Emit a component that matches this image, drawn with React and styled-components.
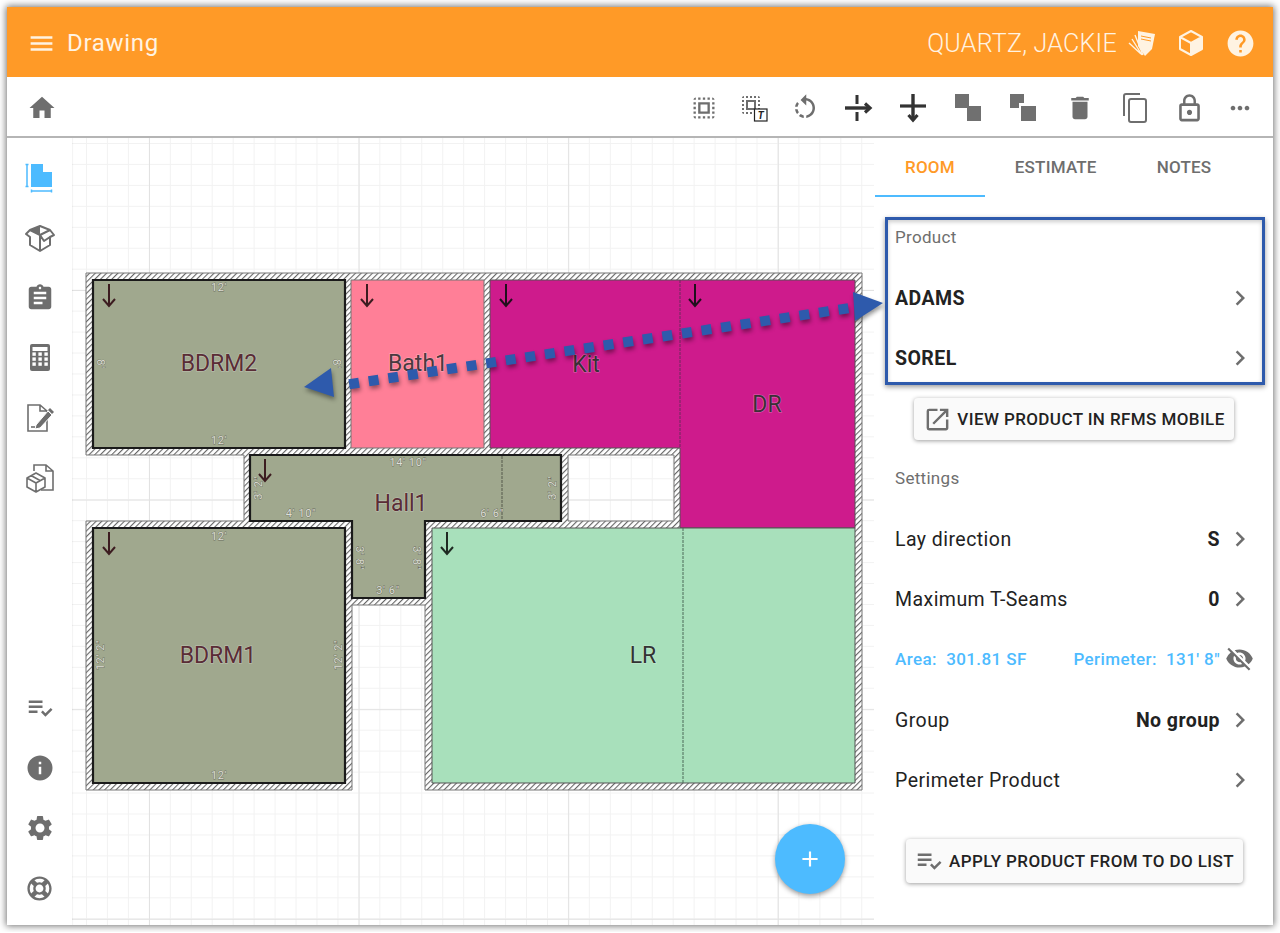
import React from "react";
import styled, { createGlobalStyle } from "styled-components";
import {
  MdMenu,
  MdHome,
  MdChevronRight,
  MdOpenInNew,
  MdInfo,
  MdSettings,
  MdDelete,
  MdHelp,
  MdPlaylistAddCheck,
  MdVisibilityOff,
  MdAssignment,
  MdRotateLeft,
  MdLockOutline,
  MdMoreHoriz,
  MdSelectAll,
  MdAdd,
} from "react-icons/md";
import { FaRegLifeRing } from "react-icons/fa";

const ORANGE = "#ff9a27";
const BLUE = "#4dbbff";
const GREY = "#6e6e6e";
const NOTE = "#2e5aac";

const GlobalStyle = createGlobalStyle`
  html, body { margin: 0; padding: 0; background: #fff; }
  body { font-family: Roboto, "Liberation Sans", sans-serif; }
  * { box-sizing: border-box; }
`;

/* floor plan data, page coordinates (the svg viewBox starts at the canvas corner) */
const ROOMS = [
  { id: "bdrm2", points: "93,280 345,280 345,448 93,448", fill: "#a0a88e", stroke: "#1a1a1a", w: 2.2 },
  { id: "bath1", points: "351,280 484,280 484,448 351,448", fill: "#ff7f97", stroke: "#777", w: 1 },
  { id: "kit", points: "490,280 855,280 855,528 680,528 680,448 490,448", fill: "#ce1b8c", stroke: "#555", w: 1 },
  { id: "hall1", points: "250,455 561,455 561,521 425,521 425,598 352,598 352,521 250,521", fill: "#a0a88e", stroke: "#1a1a1a", w: 2.2 },
  { id: "bdrm1", points: "93,528 345,528 345,783 93,783", fill: "#a0a88e", stroke: "#1a1a1a", w: 2.2 },
  { id: "lr", points: "432,528 855,528 855,783 432,783", fill: "#a8e0bb", stroke: "#555", w: 1 },
];

const SEAMS = [
  [680, 280, 680, 448, "#6d2a5c"],
  [683, 528, 683, 783, "#4c6b58"],
  [502, 456, 502, 520, "#55584a"],
];

const LABELS = [
  { text: "BDRM2", x: 219, y: 371, color: "#5a2c36" },
  { text: "Bath1", x: 418, y: 371, color: "#4a3a40" },
  { text: "Kit", x: 586, y: 372, color: "#3a3036" },
  { text: "DR", x: 767, y: 412, color: "#3a3036" },
  { text: "Hall1", x: 401, y: 511, color: "#5a2c36" },
  { text: "BDRM1", x: 218, y: 663, color: "#5a2c36" },
  { text: "LR", x: 643, y: 663, color: "#333" },
];

const DIMS = [
  { text: "12'", x: 219, y: 291 },
  { text: "12'", x: 219, y: 444 },
  { text: "8'", x: 100, y: 364, r: 90 },
  { text: "8'", x: 336, y: 364, r: 90 },
  { text: "14' 10\"", x: 408, y: 466 },
  { text: "3' 2\"", x: 258, y: 488, r: 270 },
  { text: "3' 2\"", x: 552, y: 488, r: 270 },
  { text: "4' 10\"", x: 301, y: 517 },
  { text: "6' 6\"", x: 492, y: 517 },
  { text: "3' 8\"", x: 359, y: 558, r: 90 },
  { text: "3' 8\"", x: 416, y: 558, r: 90 },
  { text: "3' 6\"", x: 388, y: 594 },
  { text: "12'", x: 219, y: 540 },
  { text: "12'", x: 219, y: 779 },
  { text: "12' 2\"", x: 100, y: 655, r: 270 },
  { text: "12' 2\"", x: 338, y: 655, r: 270 },
];

const LAY_ARROWS = [
  [109, 284, "#3c1c20"],
  [367, 284, "#3c1c20"],
  [506, 284, "#20101c"],
  [695, 284, "#20101c"],
  [265, 459, "#3c1c20"],
  [109, 532, "#3c1c20"],
  [447, 532, "#1f2a22"],
];

/* ---- icons that no package has ---- */

const CardsIcon = () => (
  <svg width="30" height="30" viewBox="0 0 30 30">
    <path d="M11 3 L28 6 L25 21 L18 28 L11 18 Z" fill="#fff3e2" />
    <path d="M14 8 L24 10 M14 11 L24 13" stroke={ORANGE} strokeWidth="1" />
    <path d="M16 27 L8 7 M15 27 L5 11 M14 26 L2 15" stroke="#fff3e2" strokeWidth="1.4" fill="none" />
  </svg>
);

const CubeIcon = () => (
  <svg width="28" height="28" viewBox="0 0 28 28">
    <path d="M14 14 L25 8 V20 L14 26 Z" fill="#fff3e2" />
    <path
      d="M14 2 L25 8 V20 L14 26 L3 20 V8 Z M3 8 L14 14 L25 8 M14 14 V26"
      fill="none"
      stroke="#fff3e2"
      strokeWidth="2"
      strokeLinejoin="round"
    />
  </svg>
);

const SelectTextIcon = () => (
  <svg width="30" height="30" viewBox="0 0 30 30">
    <g fill={GREY}>
      <path d="M3 5h2V3c-1.1 0-2 .9-2 2zm0 8h2v-2H3v2zm4 8h2v-2H7v2zM3 9h2V7H3v2zm10-6h-2v2h2V3zm6 0v2h2c0-1.1-.9-2-2-2zM5 21v-2H3c0 1.1.9 2 2 2zm-2-4h2v-2H3v2zM9 3H7v2h2V3zm2 18h2v-2h-2v2zm8-8h2v-2h-2v2zm0 8c1.1 0 2-.9 2-2h-2v2zm0-12h2V7h-2v2zm0 8h2v-2h-2v2zm-4 4h2v-2h-2v2zm0-16h2V3h-2v2zM7 17h10V7H7v10zm2-8h6v6H9V9z" />
    </g>
    <rect x="15.5" y="16" width="12.5" height="12" fill="#fff" stroke="#222" strokeWidth="1.2" />
    <text x="21.7" y="25.5" fontSize="10" fontWeight="700" fontStyle="italic" textAnchor="middle" fill="#222">
      T
    </text>
  </svg>
);

const PassRight = () => (
  <svg width="30" height="30" viewBox="0 0 30 30">
    <path d="M14 2 V11 M14 19 V28" stroke="#333" strokeWidth="3" />
    <path d="M2 15 H26" stroke="#333" strokeWidth="3.4" />
    <path d="M22 10.5 L27 15 L22 19.5" stroke="#333" strokeWidth="3.2" fill="none" />
  </svg>
);

const PassDown = () => (
  <svg width="30" height="30" viewBox="0 0 30 30">
    <path d="M2 13 H28" stroke="#333" strokeWidth="3.2" />
    <path d="M15 1 V26" stroke="#333" strokeWidth="3.4" />
    <path d="M10.5 22 L15 27 L19.5 22" stroke="#333" strokeWidth="3.2" fill="none" />
  </svg>
);

const ToFront = () => (
  <svg width="30" height="30" viewBox="0 0 30 30">
    <path d="M2 1 H16 V13 H28 V28 H14 V15 H2 Z" fill="#707070" />
  </svg>
);

const ToBack = () => (
  <svg width="30" height="30" viewBox="0 0 30 30">
    <path d="M2 1 H16 V10 H11 V15 H2 Z" fill="#707070" />
    <rect x="13" y="13" width="15" height="15" fill="#707070" />
  </svg>
);

const CopyIcon = () => (
  <svg width="30" height="32" viewBox="0 0 30 32">
    <path d="M4 24 V4 Q4 2 6 2 H20" fill="none" stroke={GREY} strokeWidth="2" />
    <rect x="9" y="7" width="17" height="23" rx="2" fill="none" stroke={GREY} strokeWidth="2" />
  </svg>
);

const PlanIcon = () => (
  <svg width="30" height="30" viewBox="0 0 30 30">
    <path d="M6 1 H18 V9 H27 V24 H6 Z" fill={BLUE} />
    <path d="M2 1 V24 M0.5 1.5 H3.5 M0.5 23.5 H3.5 M6 28 H27 M6.5 26.5 V29.5 M26.5 26.5 V29.5" stroke={BLUE} strokeWidth="1.5" fill="none" />
  </svg>
);

const OpenBoxIcon = () => (
  <svg width="30" height="30" viewBox="0 0 30 30">
    <path
      d="M15 3 L25 7 L29 12 L25 14 V22 L15 28 L5 22 V14 L1 11 L5 7 Z M5 7 L15 12 L25 7 M15 12 V28 M15 12 L19 18 L25 14"
      fill="none"
      stroke={GREY}
      strokeWidth="2"
      strokeLinejoin="round"
    />
    <path d="M5 7 L15 3 L15 12 Z" fill={GREY} />
  </svg>
);

const CalcIcon = () => (
  <svg width="30" height="30" viewBox="0 0 30 30">
    <rect x="5" y="1" width="20" height="27" rx="2" fill={GREY} />
    <rect x="7.5" y="4" width="15" height="4" fill="#fff" />
    {[11, 16, 21].map((y) =>
      [9, 15, 21].map((x) => <rect key={`${x}-${y}`} x={x - 1.6} y={y - 1.6} width="3.4" height="3.4" fill="#fff" />)
    )}
  </svg>
);

const NoteIcon = () => (
  <svg width="30" height="30" viewBox="0 0 30 30">
    <path d="M3 2 H15 L22 8 V28 H3 Z M15 2 V8 H22" fill="none" stroke={GREY} strokeWidth="1.6" />
    <path d="M11 22 L23 8 L27 12 L15 25 L10 26 Z" fill={GREY} stroke="#fff" strokeWidth="1" />
    <path d="M25 5 L29 9 L27 11 L23 7 Z" fill={GREY} />
    <path d="M6 24 H10" stroke={GREY} strokeWidth="1.6" />
  </svg>
);

const BoxDocIcon = () => (
  <svg width="30" height="30" viewBox="0 0 30 30">
    <path d="M9 8 V2 H21 L28 8 V27 H16 M21 2 V8 H28" fill="none" stroke={GREY} strokeWidth="1.6" />
    <path
      d="M11 10 L20 15 V24 L11 29 L2 24 V15 Z M2 15 L11 20 L20 15 M11 20 V29 M6 12.5 L15 17.5"
      fill="#fff"
      stroke={GREY}
      strokeWidth="1.6"
      strokeLinejoin="round"
    />
  </svg>
);

/* ---- page ---- */

const Win = styled.div`
  position: relative;
  margin: 7px;
  width: 1266px;
  height: 918px;
  display: flex;
  flex-direction: column;
  background: #fff;
  box-shadow: 0 0 7px 1px rgba(0, 0, 0, 0.55);
`;

const Header = styled.header`
  height: 70px;
  flex: none;
  display: flex;
  align-items: center;
  justify-content: space-between;
  padding: 2px 17px 0 20px;
  background: ${ORANGE};
  color: #fff3e2;
`;

const HeaderGroup = styled.div`
  display: flex;
  align-items: center;
  gap: ${(p) => p.$gap || 0}px;
`;

const Title = styled.span`
  font-size: 24px;
  letter-spacing: 0.7px;
`;

const UserName = styled.span`
  font-size: 25px;
  font-weight: 300;
  letter-spacing: 0.25px;
`;

const Toolbar = styled.div`
  height: 61px;
  flex: none;
  display: flex;
  align-items: center;
  justify-content: space-between;
  padding: 3px 10px 0 20px;
  border-bottom: 2px solid #b5b5b5;
  position: relative;
  z-index: 1;
`;

const ToolGroup = styled.div`
  display: flex;
  align-items: center;
`;

const Tool = styled.span`
  width: ${(p) => p.$w || 55}px;
  margin-left: ${(p) => p.$push || 0}px;
  display: flex;
  align-items: center;
  justify-content: center;
  color: ${GREY};
`;

const Main = styled.div`
  flex: 1;
  min-height: 0;
  display: flex;
`;

const Rail = styled.nav`
  width: 65px;
  flex: none;
  display: flex;
  flex-direction: column;
  justify-content: space-between;
  padding: 10px 0 7px;
`;

const RailGroup = styled.div`
  display: flex;
  flex-direction: column;
`;

const RailItem = styled.span`
  height: 60px;
  display: flex;
  align-items: center;
  justify-content: center;
  color: ${GREY};
`;

const Canvas = styled.div`
  position: relative;
  flex: 1;
  min-width: 0;
  overflow: hidden;
  background-color: #fff;
  background-image: linear-gradient(to right, #e2e2e2 1px, transparent 1px),
    linear-gradient(to bottom, #e2e2e2 1px, transparent 1px),
    linear-gradient(to right, #f2f2f2 1px, transparent 1px),
    linear-gradient(to bottom, #f2f2f2 1px, transparent 1px);
  background-size: 209.6px 209.6px, 209.6px 209.6px, 20.96px 20.96px, 20.96px 20.96px;
  background-position: 77px 0, 0 152px, 14px 0, 0 5px;
  box-shadow: inset 1px 0 1px rgba(0, 0, 0, 0.05);
`;

const Plan = styled.svg`
  display: block;
`;

const RoomName = styled.text`
  font-family: Roboto, "Liberation Sans", sans-serif;
  font-size: 23px;
  text-anchor: middle;
  paint-order: stroke;
  stroke: rgba(255, 255, 255, 0.35);
  stroke-width: 1.2px;
`;

const DimText = styled.text`
  font-family: Roboto, "Liberation Sans", sans-serif;
  font-size: 11px;
  letter-spacing: 0.6px;
  text-anchor: middle;
  dominant-baseline: ${(p) => (p.$side ? "central" : "auto")};
  fill: #dedfd6;
  paint-order: stroke;
  stroke: #6a6d5e;
  stroke-width: 0.8px;
`;

const Fab = styled.button`
  position: absolute;
  right: 29px;
  bottom: 31px;
  width: 70px;
  height: 70px;
  border: none;
  border-radius: 50%;
  padding: 0;
  display: flex;
  align-items: center;
  justify-content: center;
  background: ${BLUE};
  color: #fff;
  box-shadow: 0 2px 5px rgba(0, 0, 0, 0.4);
`;

const Panel = styled.aside`
  width: 399px;
  flex: none;
  display: flex;
  flex-direction: column;
  background: #fff;
  padding-left: 1px;
`;

const Tabs = styled.div`
  height: 59px;
  flex: none;
  display: flex;
`;

const Tab = styled.div`
  padding: 0 30px;
  display: flex;
  align-items: center;
  font-size: 17px;
  font-weight: 500;
  letter-spacing: 0.2px;
  color: ${(p) => (p.$active ? ORANGE : GREY)};
  border-bottom: 2px solid ${(p) => (p.$active ? BLUE : "transparent")};
`;

const SectionLabel = styled.div`
  height: ${(p) => p.$h}px;
  margin-top: ${(p) => p.$top || 0}px;
  padding: 0 20px;
  display: flex;
  align-items: center;
  font-size: 17px;
  letter-spacing: 0.3px;
  color: ${GREY};
  flex: none;
`;

const Row = styled.div`
  height: 60px;
  margin-top: ${(p) => p.$top || 0}px;
  flex: none;
  display: flex;
  align-items: center;
  justify-content: space-between;
  padding: 0 18px 0 20px;
  font-size: 19.5px;
  letter-spacing: 0.45px;
  color: #222;
`;

const Name = styled.span`
  font-weight: ${(p) => (p.$bold ? 700 : 400)};
`;

const RowEnd = styled.span`
  display: flex;
  align-items: center;
  gap: 5px;
  font-weight: 700;
  color: ${GREY};
`;

const Value = styled.span`
  color: #222;
`;

const StatRow = styled.div`
  height: 61px;
  flex: none;
  display: flex;
  align-items: center;
  justify-content: space-between;
  padding: 0 19px 2px 20px;
  color: ${BLUE};
  font-size: 17px;
  font-weight: 500;
  letter-spacing: 0.4px;
`;

const StatEnd = styled.span`
  display: flex;
  align-items: center;
  gap: 5px;
  color: ${BLUE};
`;

const ActionButton = styled.button`
  align-self: center;
  flex: none;
  width: ${(p) => p.$w}px;
  height: ${(p) => p.$h}px;
  margin-top: ${(p) => p.$top}px;
  padding: 0 8px;
  display: flex;
  align-items: center;
  justify-content: center;
  gap: 5px;
  border: none;
  border-radius: 4px;
  background: #fafafa;
  color: #222;
  font-family: inherit;
  font-size: 17px;
  font-weight: 500;
  letter-spacing: 0.4px;
  white-space: nowrap;
  box-shadow: 0 1px 4px rgba(0, 0, 0, 0.38);
  svg {
    color: ${GREY};
    flex: none;
  }
`;

const NoteBox = styled.div`
  position: absolute;
  left: 878px;
  top: 210px;
  width: 380px;
  height: 168px;
  border: 3px solid ${NOTE};
  box-shadow: 0 2px 5px rgba(0, 0, 0, 0.4), inset 0 2px 4px rgba(0, 0, 0, 0.2);
  pointer-events: none;
`;

const NoteArrow = styled.svg`
  position: absolute;
  left: 0;
  top: 0;
  pointer-events: none;
  filter: drop-shadow(1px 3px 2px rgba(0, 0, 0, 0.4));
`;

const settings = [
  { name: "Lay direction", value: "S" },
  { name: "Maximum T-Seams", value: "0" },
];

const App = () => (
  <>
    <GlobalStyle />
    <Win>
      <Header>
        <HeaderGroup $gap={11}>
          <MdMenu size={29} />
          <Title>Drawing</Title>
        </HeaderGroup>
        <HeaderGroup $gap={20}>
          <HeaderGroup $gap={10}>
            <UserName>QUARTZ, JACKIE</UserName>
            <CardsIcon />
          </HeaderGroup>
          <CubeIcon />
          <MdHelp size={31} />
        </HeaderGroup>
      </Header>

      <Toolbar>
        <MdHome size={30} color={GREY} />
        <ToolGroup>
          <Tool $w={50.5}><MdSelectAll size={28} /></Tool>
          <Tool $w={50.5}><SelectTextIcon /></Tool>
          <Tool $w={50.5}><MdRotateLeft size={30} /></Tool>
          <Tool><PassRight /></Tool>
          <Tool><PassDown /></Tool>
          <Tool><ToFront /></Tool>
          <Tool><ToBack /></Tool>
          <Tool $push={2}><MdDelete size={30} /></Tool>
          <Tool><CopyIcon /></Tool>
          <Tool><MdLockOutline size={31} /></Tool>
          <Tool $w={46}><MdMoreHoriz size={28} /></Tool>
        </ToolGroup>
      </Toolbar>

      <Main>
        <Rail>
          <RailGroup>
            <RailItem><PlanIcon /></RailItem>
            <RailItem><OpenBoxIcon /></RailItem>
            <RailItem><MdAssignment size={30} /></RailItem>
            <RailItem><CalcIcon /></RailItem>
            <RailItem><NoteIcon /></RailItem>
            <RailItem><BoxDocIcon /></RailItem>
          </RailGroup>
          <RailGroup>
            <RailItem><MdPlaylistAddCheck size={30} /></RailItem>
            <RailItem><MdInfo size={30} /></RailItem>
            <RailItem><MdSettings size={30} /></RailItem>
            <RailItem><FaRegLifeRing size={25} /></RailItem>
          </RailGroup>
        </Rail>

        <Canvas>
          <Plan width="802" height="787" viewBox="72 138 802 787">
            <defs>
              <pattern id="hatch" width="4" height="4" patternUnits="userSpaceOnUse" patternTransform="rotate(45)">
                <rect width="4" height="4" fill="#fff" />
                <rect width="1.1" height="4" fill="#666" />
              </pattern>
            </defs>
            <path
              d="M86 273 H862 V790 H425 V605 H352 V790 H86 V521 H244 V455 H86 Z M568 455 H674 V521 H568 Z"
              fill="url(#hatch)"
              fillRule="evenodd"
              stroke="#777"
              strokeWidth="1"
            />
            {ROOMS.map((room) => (
              <polygon key={room.id} points={room.points} fill={room.fill} stroke={room.stroke} strokeWidth={room.w} />
            ))}
            {SEAMS.map(([x1, y1, x2, y2, color]) => (
              <line key={x1} x1={x1} y1={y1} x2={x2} y2={y2} stroke={color} strokeWidth="1" strokeDasharray="3 1" />
            ))}
            {LAY_ARROWS.map(([x, y, color]) => (
              <path
                key={`${x}-${y}`}
                d={`M${x} ${y} V${y + 22} M${x - 6} ${y + 15} L${x} ${y + 22} L${x + 6} ${y + 15}`}
                fill="none"
                stroke={color}
                strokeWidth="2"
              />
            ))}
            {DIMS.map((d) => (
              <DimText
                key={`${d.x}-${d.y}`}
                x={d.x}
                y={d.y}
                $side={!!d.r}
                transform={d.r ? `rotate(${d.r} ${d.x} ${d.y})` : undefined}
              >
                {d.text}
              </DimText>
            ))}
            {LABELS.map((l) => (
              <RoomName key={l.text} x={l.x} y={l.y} fill={l.color}>
                {l.text}
              </RoomName>
            ))}
          </Plan>
          <Fab><MdAdd size={26} /></Fab>
        </Canvas>

        <Panel>
          <Tabs>
            <Tab $active>ROOM</Tab>
            <Tab>ESTIMATE</Tab>
            <Tab>NOTES</Tab>
          </Tabs>
          <SectionLabel $top={19} $h={42}>Product</SectionLabel>
          <Row $top={10}>
            <Name $bold>ADAMS</Name>
            <RowEnd><MdChevronRight size={30} /></RowEnd>
          </Row>
          <Row>
            <Name $bold>SOREL</Name>
            <RowEnd><MdChevronRight size={30} /></RowEnd>
          </Row>
          <ActionButton $w={320} $h={42} $top={10}>
            <MdOpenInNew size={29} />
            VIEW PRODUCT IN RFMS MOBILE
          </ActionButton>
          <SectionLabel $top={18} $h={40}>Settings</SectionLabel>
          <Row $top={11}>
            <Name>{settings[0].name}</Name>
            <RowEnd><Value>{settings[0].value}</Value><MdChevronRight size={30} /></RowEnd>
          </Row>
          <Row>
            <Name>{settings[1].name}</Name>
            <RowEnd><Value>{settings[1].value}</Value><MdChevronRight size={30} /></RowEnd>
          </Row>
          <StatRow>
            <span>Area:&nbsp; 301.81 SF</span>
            <StatEnd>
              Perimeter:&nbsp; 131' 8"
              <MdVisibilityOff size={29} color={GREY} />
            </StatEnd>
          </StatRow>
          <Row>
            <Name>Group</Name>
            <RowEnd><Value>No group</Value><MdChevronRight size={30} /></RowEnd>
          </Row>
          <Row>
            <Name>Perimeter Product</Name>
            <RowEnd><MdChevronRight size={30} /></RowEnd>
          </Row>
          <ActionButton $w={337} $h={44} $top={29}>
            <MdPlaylistAddCheck size={30} />
            APPLY PRODUCT FROM TO DO LIST
          </ActionButton>
        </Panel>
      </Main>

      <NoteBox />
      <NoteArrow width="1266" height="918" viewBox="7 7 1266 918">
        <path d="M848.4 308.2 L344 385" stroke={NOTE} strokeWidth="10" strokeDasharray="10 9.8" fill="none" />
        <polygon points="304,387 331,368 334,397" fill={NOTE} />
        <polygon points="853,292 855,321 883,303" fill={NOTE} />
      </NoteArrow>
    </Win>
  </>
);

export default App;
